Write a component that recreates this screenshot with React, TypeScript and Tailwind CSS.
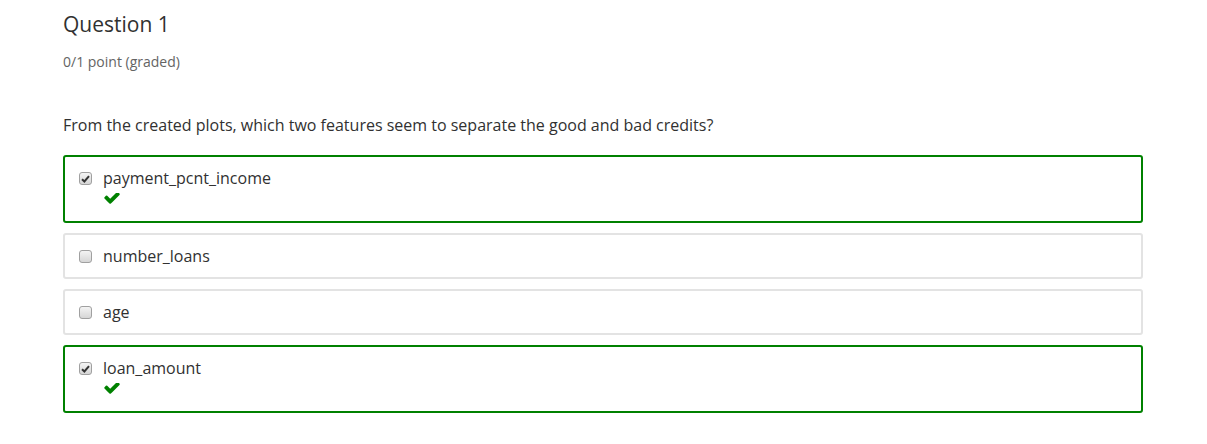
import React from 'react'

type Choice = {
  label: string
  checked: boolean
}

const choices: Choice[] = [
  { label: 'payment_pcnt_income', checked: true },
  { label: 'number_loans', checked: false },
  { label: 'age', checked: false },
  { label: 'loan_amount', checked: true },
]

const Box = ({ checked }: { checked: boolean }) => (
  <span className="mt-[5px] flex h-[13px] w-[13px] shrink-0 items-center justify-center rounded-[3px] border border-[#a0a0a0] bg-gradient-to-b from-[#f4f4f4] to-[#d6d6d6]">
    {checked && (
      <svg width="9" height="8" viewBox="0 0 9 8">
        <path d="M1 4.2 L3.4 6.5 L8 1.2" fill="none" stroke="#333" strokeWidth="2" />
      </svg>
    )}
  </span>
)

const Tick = () => (
  <svg width="18" height="13" viewBox="0 0 1792 1300" className="mt-[4px]">
    <path
      fill="#008100"
      d="M1671 278q0 40-28 68l-724 724-136 136q-28 28-68 28t-68-28l-136-136-362-362q-28-28-28-68t28-68l136-136q28-28 68-28t68 28l294 295 656-657q28-28 68-28t68 28l136 136q28 28 28 68z"
      transform="translate(0 -150)"
    />
  </svg>
)

const App = () => {
  return (
    <div className="min-h-[444px] w-[1207px] bg-white pl-[63px] pt-[8px] font-['Open_Sans',sans-serif]">
      <h2 className="text-[21px] leading-[32px] text-[#313131]">Question 1</h2>
      <p className="mt-[12px] text-[14px] leading-[20px] text-[#646464]">0/1 point (graded)</p>

      <p className="mt-[42px] text-[16px] leading-[22px] text-[#313131]">
        From the created plots, which two features seem to separate the good and bad credits?
      </p>

      <div className="mt-[19px] flex w-[1080px] flex-col gap-[10px]">
        {choices.map((c) => (
          <label
            key={c.label}
            className={`flex rounded-[3px] border-2 px-[14px] py-[10px] ${
              c.checked ? 'border-[#008100]' : 'border-[#e3e3e3]'
            }`}
          >
            <Box checked={c.checked} />
            <div className="ml-[11px] flex flex-col">
              <span className="text-[16px] leading-[22px] text-[#313131]">{c.label}</span>
              {c.checked && (
                <div className="h-[22px]">
                  <Tick />
                </div>
              )}
            </div>
          </label>
        ))}
      </div>
    </div>
  )
}

export default App
